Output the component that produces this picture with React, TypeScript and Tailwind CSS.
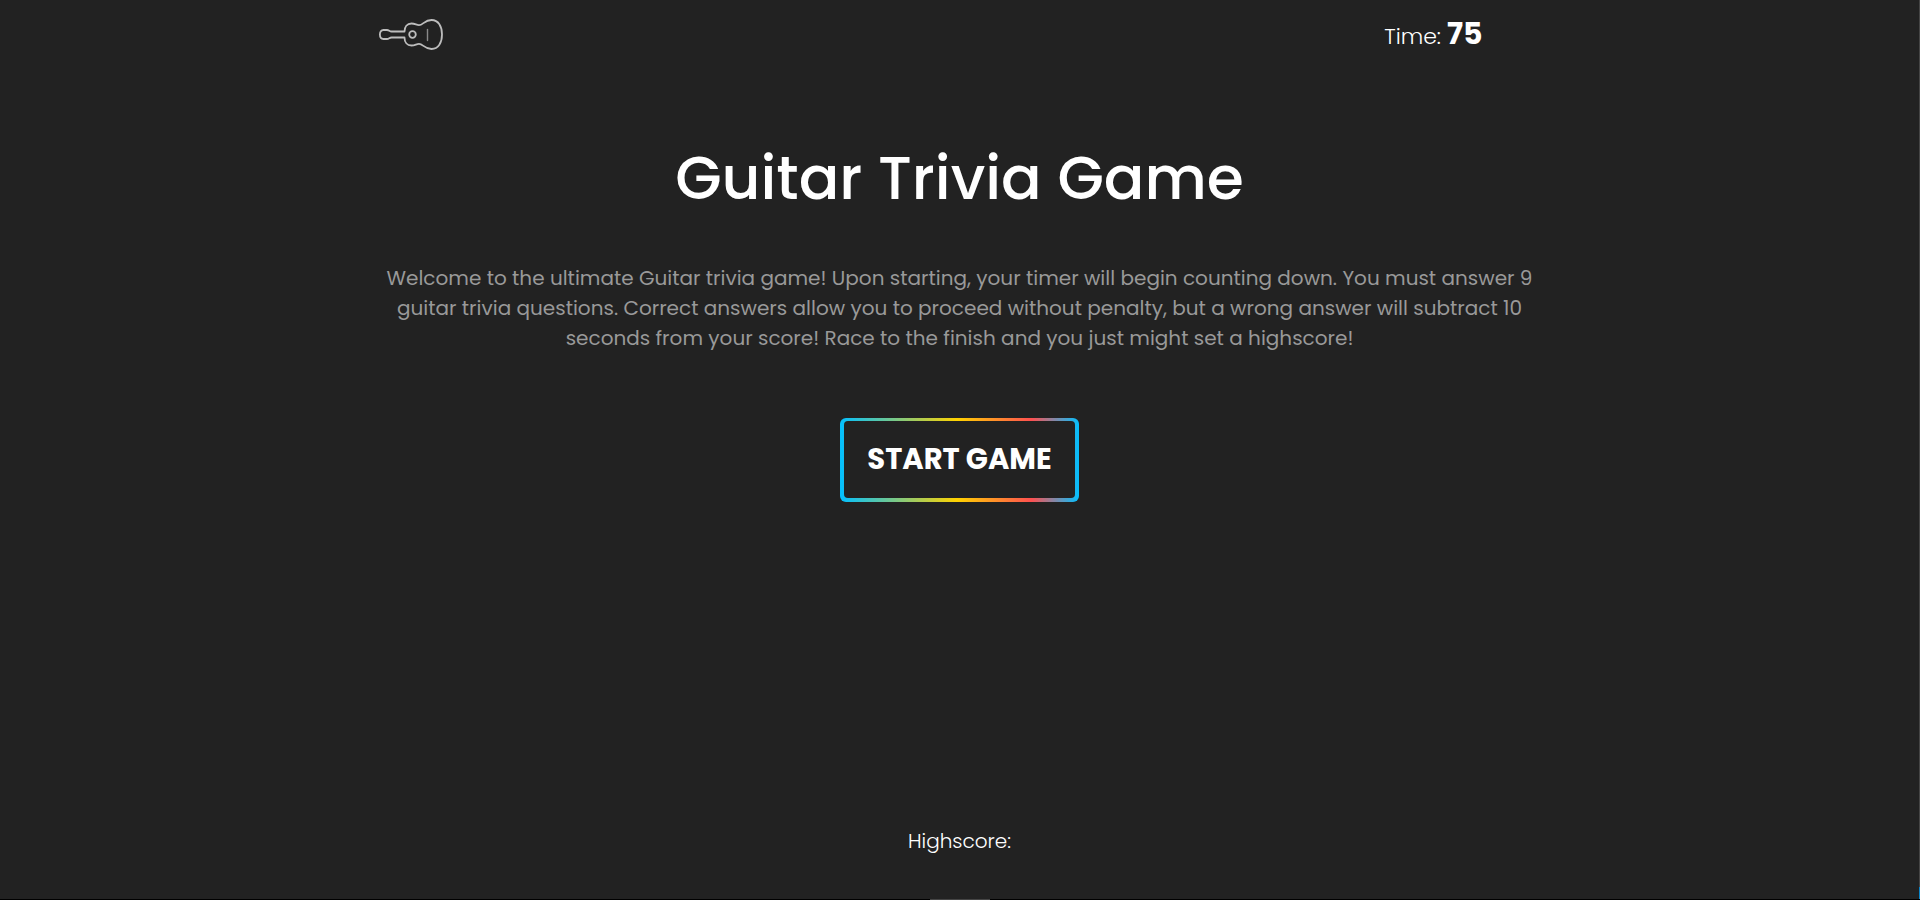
import { useState } from "react";

function GuitarIcon() {
  return (
    <svg viewBox="0 0 64 32" className="h-8 w-16" fill="none" stroke="#bdbdbd" strokeWidth="1.8" strokeLinecap="round" strokeLinejoin="round" aria-hidden="true">
      <path d="M25.5 13.5H12.5C10.5 13.5 10 12 8 12H4.5C2 12 .9 14 .9 16.5S2 21 4.5 21H8C10 21 10.5 19.5 12.5 19.5H25.5C25.5 24 28 27.5 32.5 27.5C36 27.5 37.5 25.8 40 25.8C44 25.8 45.5 31 52.5 31C59.5 31 63 24.5 63 16.5S59.5 2 52.5 2C45.5 2 44 7.2 40 7.2C37.5 7.2 36 5.5 32.5 5.5C28 5.5 25.5 9 25.5 13.5Z" />
      <circle cx="33.5" cy="16.5" r="3.3" />
      <path d="M48.5 11.5V22.5" stroke="#8a8a8a" strokeWidth="1.4" />
    </svg>
  );
}

export default function App() {
  const [seconds] = useState(75);
  return (
    <div className="flex min-h-screen flex-col bg-[#222222] font-['Poppins','Inter',sans-serif] text-white">
      <div className="flex grow">
        <div className="flex grow flex-col items-center">
          <header className="flex h-[68px] w-full max-w-[1162px] items-center justify-between pr-[58px]">
            <a href="#home" aria-label="Home"><GuitarIcon /></a>
            <p className="flex items-baseline gap-1.5 text-[22px] leading-8 font-light">
              Time: <strong className="text-3xl font-bold">{seconds}</strong>
            </p>
          </header>
          <main className="flex w-full max-w-[1160px] grow flex-col items-center text-center">
            <h1 className="mt-[62px] text-[60px] leading-[96px] font-medium">Guitar Trivia Game</h1>
            <p className="mt-[37px] text-xl leading-[30px] text-[#999999]">
              Welcome to the ultimate Guitar trivia game! Upon starting, your timer will begin counting down. You must
              answer 9 guitar trivia questions. Correct answers allow you to proceed without penalty, but a wrong answer
              will subtract 10 seconds from your score! Race to the finish and you just might set a highscore!
            </p>
            <button
              type="button"
              className="mt-[65px] rounded-md bg-[linear-gradient(to_right,#03c0ff_0%,#ffd200_49%,#ff5050_80%,#03c0ff_100%)] px-1 pt-[3px] pb-1"
            >
              <span className="block rounded-sm bg-[#222222] px-[23px] py-5 text-[29px] leading-[37px] font-bold">START GAME</span>
            </button>
          </main>
          <footer className="pb-10 text-xl leading-[36px] font-light">Highscore:</footer>
        </div>
        <div className="flex w-px flex-col bg-[#454545]">
          <div className="mt-auto h-3 bg-[#0a84c8]" />
        </div>
      </div>
      <div className="flex h-px justify-center bg-black">
        <div className="w-[60px] bg-[#454545]" />
      </div>
    </div>
  );
}
